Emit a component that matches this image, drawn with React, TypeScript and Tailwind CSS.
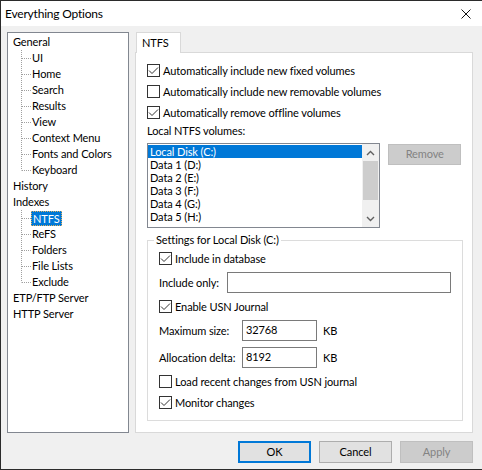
import React from "react";

type Node = { label: string; children?: string[] };

const tree: Node[] = [
  {
    label: "General",
    children: ["UI", "Home", "Search", "Results", "View", "Context Menu", "Fonts and Colors", "Keyboard"],
  },
  { label: "History" },
  { label: "Indexes", children: ["NTFS", "ReFS", "Folders", "File Lists", "Exclude"] },
  { label: "ETP/FTP Server" },
  { label: "HTTP Server" },
];

const volumes = ["Local Disk (C:)", "Data 1 (D:)", "Data 2 (E:)", "Data 3 (F:)", "Data 4 (G:)", "Data 5 (H:)"];

function Connector({ last }: { last: boolean }) {
  return (
    <svg width="11" height="16" viewBox="0 0 11 16" className="shrink-0">
      <line x1="1.5" y1="0" x2="1.5" y2={last ? 8.5 : 16} stroke="#a0a0a0" strokeDasharray="1 1" />
      <line x1="2" y1="8.5" x2="11" y2="8.5" stroke="#a0a0a0" strokeDasharray="1 1" />
    </svg>
  );
}

function Check({ checked }: { checked?: boolean }) {
  return (
    <span className="flex h-[13px] w-[13px] shrink-0 items-center justify-center border border-[#333333] bg-white">
      {checked && (
        <svg width="11" height="11" viewBox="0 0 11 11">
          <path d="M1 5.5 L4 8.5 L10 2.5" fill="none" stroke="#333333" strokeWidth="1" />
        </svg>
      )}
    </span>
  );
}

function CheckRow({ checked, label, className = "" }: { checked?: boolean; label: string; className?: string }) {
  return (
    <div className={`flex h-[13px] items-center gap-[3px] ${className}`}>
      <Check checked={checked} />
      <span className="whitespace-nowrap leading-4">{label}</span>
    </div>
  );
}

function Chevron({ up }: { up?: boolean }) {
  return (
    <svg width="9" height="6" viewBox="0 0 9 6">
      <path d={up ? "M1 5 L4.5 1.5 L8 5" : "M1 1 L4.5 4.5 L8 1"} fill="none" stroke="#606060" strokeWidth="1.4" />
    </svg>
  );
}

function Button({ label, primary, disabled }: { label: string; primary?: boolean; disabled?: boolean }) {
  const look = disabled
    ? "border border-[#bfbfbf] bg-[#cccccc] text-[#838383]"
    : primary
      ? "border-2 border-[#0078d7] bg-[#e1e1e1] text-black"
      : "border border-[#adadad] bg-[#e1e1e1] text-black";
  return <button className={`flex h-[22px] w-[73px] items-center justify-center ${look}`}>{label}</button>;
}

export default function App() {
  return (
    <div className="flex h-[470px] w-[482px] flex-col border-b border-l border-t border-[#2b2b2b] bg-[#f0f0f0] font-['Lato',sans-serif] text-[11px] tracking-[-0.1px] text-black">
      {/* title bar */}
      <div className="flex h-[25px] shrink-0 items-center justify-between bg-white pl-[4px] pr-[11px]">
        <span className="text-[12px] leading-4 tracking-[-0.2px]">Everything Options</span>
        <svg width="10" height="10" viewBox="0 0 10 10">
          <path d="M0.5 0.5 L9.5 9.5 M9.5 0.5 L0.5 9.5" stroke="#111111" strokeWidth="1" />
        </svg>
      </div>

      <div className="flex flex-1 flex-col pl-[6px] pt-[6px]">
        <div className="flex w-[466px] gap-[6px]">
          {/* tree */}
          <div className="h-[401px] w-[122px] border border-[#828790] bg-white pt-[1px]">
            {tree.map((n) => (
              <div key={n.label}>
                <div className="flex h-4 items-center pl-[5px] leading-4">{n.label}</div>
                {n.children?.map((c, i) => (
                  <div key={c} className="flex h-4 items-center pl-[12px]">
                    <Connector last={i === n.children!.length - 1} />
                    {c === "NTFS" ? (
                      <span className="border border-dotted border-[#e0b060] bg-[#0078d7] px-[1px] leading-[13px] text-white">
                        {c}
                      </span>
                    ) : (
                      <span className="px-[1px] leading-4">{c}</span>
                    )}
                  </div>
                ))}
              </div>
            ))}
          </div>

          {/* tab area */}
          <div className="flex w-[338px] flex-col">
            <div className="relative z-10 -mb-[1px] ml-[1px] flex h-[21px] w-[45px] items-center border-l border-r border-t border-[#d9d9d9] bg-white pl-[5px]">
              NTFS
            </div>
            <div className="flex h-[381px] flex-col border border-[#d9d9d9] bg-white px-[11px] pt-[11px]">
              <CheckRow checked label="Automatically include new fixed volumes" />
              <CheckRow label="Automatically include new removable volumes" className="mt-[8px]" />
              <CheckRow checked label="Automatically remove offline volumes" className="mt-[8px]" />
              <div className="mt-[4px] h-4 leading-4">Local NTFS volumes:</div>

              <div className="mt-[4px] flex items-start gap-[8px]">
                <div className="flex h-[85px] w-[235px] border border-[#828790] bg-white">
                  <div className="flex-1 overflow-hidden pt-[1px]">
                    {volumes.map((v, i) => (
                      <div
                        key={v}
                        className={`h-[13px] overflow-hidden pl-[2px] leading-[13px] ${i === 0 ? "bg-[#0078d7] text-white" : ""}`}
                      >
                        {v}
                      </div>
                    ))}
                  </div>
                  <div className="flex w-[17px] flex-col bg-[#f0f0f0]">
                    <div className="flex h-[17px] items-center justify-center">
                      <Chevron up />
                    </div>
                    <div className="flex-1">
                      <div className="mx-[1px] h-[39px] bg-[#cdcdcd]" />
                    </div>
                    <div className="flex h-[17px] items-center justify-center">
                      <Chevron />
                    </div>
                  </div>
                </div>
                <button className="mt-[1px] flex h-[21px] w-[73px] items-center justify-center border border-[#bfbfbf] bg-[#cccccc] text-[#838383]">
                  Remove
                </button>
              </div>

              <fieldset className="mt-[4px] w-[316px] border border-[#dcdcdc]">
                <legend className="ml-[6px] px-[2px] leading-4">Settings for Local Disk (C:)</legend>
                <div className="flex flex-col px-[11px] pb-[11px] pt-[4px]">
                  <CheckRow checked label="Include in database" />
                  <div className="mt-[7px] flex h-[21px] items-center">
                    <span className="w-[68px] shrink-0 whitespace-nowrap leading-4">Include only:</span>
                    <div className="h-[21px] w-[224px] border border-[#7a7a7a] bg-white" />
                  </div>
                  <CheckRow checked label="Enable USN Journal" className="mt-[7px]" />
                  <div className="mt-[7px] flex h-[21px] items-center">
                    <span className="w-[83px] shrink-0 whitespace-nowrap leading-4">Maximum size:</span>
                    <div className="flex h-[21px] w-[75px] items-center border border-[#7a7a7a] bg-white pl-[3px]">32768</div>
                    <span className="ml-[6px] leading-4">KB</span>
                  </div>
                  <div className="mt-[6px] flex h-[21px] items-center">
                    <span className="w-[83px] shrink-0 whitespace-nowrap leading-4">Allocation delta:</span>
                    <div className="flex h-[21px] w-[75px] items-center border border-[#7a7a7a] bg-white pl-[3px]">8192</div>
                    <span className="ml-[6px] leading-4">KB</span>
                  </div>
                  <CheckRow label="Load recent changes from USN journal" className="mt-[7px]" />
                  <CheckRow checked label="Monitor changes" className="mt-[8px]" />
                </div>
              </fieldset>
            </div>
          </div>
        </div>

        <div className="mt-[8px] flex w-[466px] justify-end gap-[8px]">
          <Button label="OK" primary />
          <Button label="Cancel" />
          <Button label="Apply" disabled />
        </div>
      </div>
    </div>
  );
}
